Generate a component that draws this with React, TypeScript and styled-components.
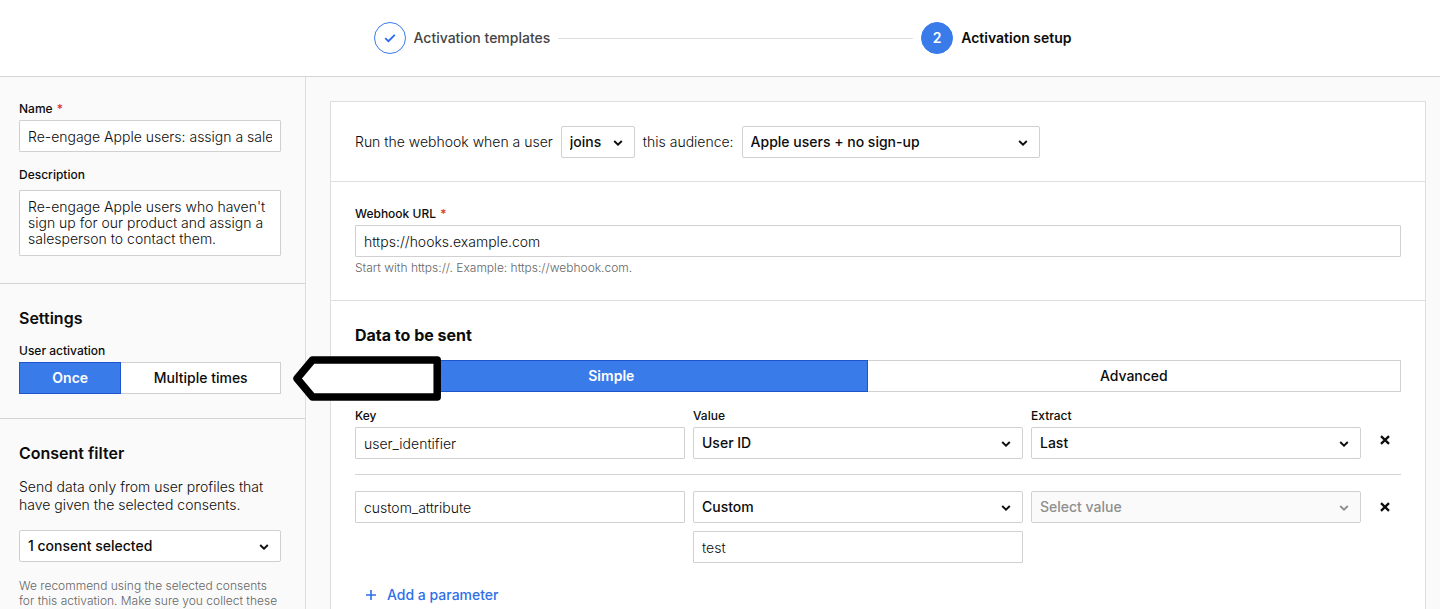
import React from "react";
import styled, { createGlobalStyle } from "styled-components";

const GlobalStyle = createGlobalStyle`
  *, *::before, *::after { box-sizing: border-box; }
  body {
    margin: 0;
    background: #fafafa;
    color: #0c0c0c;
    font-family: Inter, "Liberation Sans", sans-serif;
    font-size: 14px;
    font-weight: 300;
    line-height: 18px;
  }
  button, input, select, textarea { font: inherit; color: inherit; margin: 0; }
  h2, p { margin: 0; }
`;

const Page = styled.div`
  min-height: 100vh;
  display: flex;
  flex-direction: column;
`;

const Header = styled.header`
  height: 77px;
  padding: 0 14px 0 19px;
  display: flex;
  align-items: center;
  justify-content: center;
  background: #fff;
  border-bottom: 1px solid #d4d4d4;
`;

const Stepper = styled.ol`
  flex: 0 1 698px;
  display: flex;
  align-items: center;
  gap: 8px;
  margin: 0;
  padding: 0;
  list-style: none;
`;

const Step = styled.li<{ $active?: boolean }>`
  display: flex;
  align-items: center;
  gap: 8px;
  font-weight: ${(p) => (p.$active ? 600 : 550)};
  color: ${(p) => (p.$active ? "#0c0c0c" : "#444")};
  white-space: nowrap;
`;

const StepMark = styled.span<{ $active?: boolean }>`
  width: 32px;
  height: 32px;
  display: flex;
  align-items: center;
  justify-content: center;
  border: 1px solid #3a7bea;
  border-radius: 50%;
  background: ${(p) => (p.$active ? "#3a7bea" : "#fff")};
  color: ${(p) => (p.$active ? "#fff" : "#2a6af0")};
`;

const StepLine = styled.li`
  flex: 1;
  height: 1px;
  background: #dedede;
`;

const Body = styled.div`
  flex: 1;
  display: flex;
`;

const Sidebar = styled.aside`
  flex: 0 0 306px;
  border-right: 1px solid #dcdcdc;
`;

const SideSection = styled.section`
  padding: 24px 24px 24px 19px;
  display: flex;
  flex-direction: column;
  &:first-child { padding-bottom: 27px; }
  & + & { border-top: 1px solid #d4d4d4; }
`;

const Heading = styled.h2<{ $strong?: boolean }>`
  font-size: 16px;
  line-height: 20px;
  font-weight: ${(p) => (p.$strong ? 650 : 600)};
`;

const Field = styled.div<{ $spaced?: boolean }>`
  min-width: 0;
  display: flex;
  flex-direction: column;
  gap: ${(p) => (p.$spaced ? 7 : 3)}px;
`;

const Label = styled.label`
  font-size: 12px;
  line-height: 16px;
  font-weight: 550;
`;

const Required = styled.span`
  margin-left: 1px;
  color: #e0301e;
`;

const TextInput = styled.input`
  width: 100%;
  height: 32px;
  padding: 0 8px;
  border: 1px solid #d0d0d0;
  border-radius: 1px;
  background: #fff;
`;

const TextArea = styled.textarea`
  display: block;
  width: 100%;
  padding: 8px;
  border: 1px solid #d0d0d0;
  border-radius: 1px;
  background: #fff;
  line-height: 16px;
  resize: none;
  overflow: hidden;
`;

const SelectBox = styled.div<{ $width?: string }>`
  position: relative;
  width: ${(p) => p.$width ?? "100%"};
  svg {
    position: absolute;
    right: 12px;
    top: 14px;
    pointer-events: none;
  }
`;

const NativeSelect = styled.select`
  appearance: none;
  display: block;
  width: 100%;
  height: 32px;
  padding: 0 24px 0 8px;
  border: 1px solid #d0d0d0;
  border-radius: 2px;
  background: #fff;
  font-weight: 550;
  &:disabled { background: #fafafa; color: #8e8e8e; opacity: 1; }
  &:disabled + svg { color: #8e8e8e; }
`;

const Segments = styled.div`
  position: relative;
  display: flex;
`;

const Segment = styled.button<{ $on?: boolean }>`
  flex: 1 1 auto;
  height: 32px;
  padding: 0 8px;
  border: 1px solid ${(p) => (p.$on ? "#1f55cc" : "#d0d0d0")};
  border-left-width: ${(p) => (p.$on ? 1 : 0)}px;
  background: ${(p) => (p.$on ? "#3a7bea" : "#fff")};
  color: ${(p) => (p.$on ? "#fff" : "#0c0c0c")};
  font-weight: ${(p) => (p.$on ? 600 : 550)};
`;

const Callout = styled.svg`
  position: absolute;
  z-index: 2;
  left: calc(100% + 12px);
  top: 50%;
  transform: translateY(-50%);
`;

const Help = styled.p`
  font-size: 12px;
  line-height: 15px;
  color: #666;
`;

const Stack = styled.div<{ $gap: number }>`
  display: flex;
  flex-direction: column;
  gap: ${(p) => p.$gap}px;
`;

const Main = styled.main`
  flex: 1;
  min-width: 0;
  padding: 24px 14px 0 24px;
  display: flex;
`;

const Card = styled.div`
  flex: 1;
  min-width: 0;
  background: #fff;
  border: 1px solid #dedede;
  border-bottom: 0;
`;

const CardSection = styled.section`
  padding: 24px 24px 25px;
  &:first-child { padding-bottom: 23px; }
  & + & { border-top: 1px solid #dedede; }
`;

const Sentence = styled.div`
  display: flex;
  align-items: center;
  gap: 8px;
  white-space: nowrap;
`;

const ParamRow = styled.div`
  display: grid;
  grid-template-columns: repeat(3, minmax(0, 1fr)) 32px;
  gap: 8px;
  align-items: end;
`;

const Divider = styled.hr`
  width: 100%;
  height: 1px;
  margin: 15px 0 16px;
  border: 0;
  background: #d4d4d4;
`;

const IconButton = styled.button<{ $tall?: boolean }>`
  height: ${(p) => (p.$tall ? 38 : 32)}px;
  padding: 0;
  display: flex;
  align-items: center;
  justify-content: center;
  border: 0;
  background: none;
`;

const AddButton = styled.button`
  margin-top: 20px;
  padding: 0 10px;
  display: flex;
  align-items: center;
  gap: 10px;
  border: 0;
  background: none;
  color: #2f6fe8;
  font-weight: 550;
  line-height: 24px;
`;

const Chevron = () => (
  <svg width="10" height="6" viewBox="0 0 10 6" fill="none" stroke="currentColor" strokeWidth="1.9" aria-hidden="true">
    <path d="M1.2 1l3.8 3.6L8.8 1" />
  </svg>
);

const Cross = () => (
  <svg width="10" height="10" viewBox="0 0 10 10" fill="none" stroke="currentColor" strokeWidth="2.3" aria-hidden="true">
    <path d="M1 1.2l8 7.6M9 1.2l-8 7.6" />
  </svg>
);

type PickProps = { id?: string; label?: string; value: string; width?: string; disabled?: boolean };

const Pick = ({ id, label, value, width, disabled }: PickProps) => (
  <SelectBox $width={width}>
    <NativeSelect id={id} aria-label={label} disabled={disabled} defaultValue={value}>
      <option>{value}</option>
    </NativeSelect>
    <Chevron />
  </SelectBox>
);

export default function App() {
  return (
    <Page>
      <GlobalStyle />
      <Header>
        <Stepper>
          <Step>
            <StepMark>
              <svg width="12" height="10" viewBox="0 0 12 10" fill="none" stroke="currentColor" strokeWidth="1.8" aria-hidden="true">
                <path d="M1.2 5.2l3.2 3L10.8 1.8" />
              </svg>
            </StepMark>
            Activation templates
          </Step>
          <StepLine aria-hidden="true" />
          <Step $active aria-current="step">
            <StepMark $active>2</StepMark>
            Activation setup
          </Step>
        </Stepper>
      </Header>
      <Body>
        <Sidebar>
          <SideSection>
            <Stack $gap={15}>
              <Field>
                <Label htmlFor="name">
                  Name <Required>*</Required>
                </Label>
                <TextInput id="name" defaultValue="Re-engage Apple users: assign a sale" />
              </Field>
              <Field $spaced>
                <Label htmlFor="description">Description</Label>
                <TextArea
                  id="description"
                  rows={3}
                  defaultValue="Re-engage Apple users who haven't sign up for our product and assign a salesperson to contact them."
                />
              </Field>
            </Stack>
          </SideSection>
          <SideSection>
            <Stack $gap={15}>
              <Heading>Settings</Heading>
              <Field>
                <Label as="span" id="activation-label">User activation</Label>
                <Segments role="group" aria-labelledby="activation-label">
                  <Segment type="button" $on aria-pressed="true">Once</Segment>
                  <Segment type="button" aria-pressed="false">Multiple times</Segment>
                  <Callout width="148" height="46" viewBox="0 0 148 46" aria-hidden="true">
                    <path
                      d="M4 23.5L19.5 5H144.2V42H19.5Z"
                      fill="#fff"
                      stroke="#000"
                      strokeWidth="7.5"
                      strokeLinejoin="round"
                    />
                  </Callout>
                </Segments>
              </Field>
            </Stack>
          </SideSection>
          <SideSection>
            <Stack $gap={15}>
              <Heading>Consent filter</Heading>
              <Stack $gap={16}>
                <p>Send data only from user profiles that have given the selected consents.</p>
                <Pick label="Consents" value="1 consent selected" />
                <Help>We recommend using the selected consents for this activation. Make sure you collect these</Help>
              </Stack>
            </Stack>
          </SideSection>
        </Sidebar>
        <Main>
          <Card>
            <CardSection>
              <Sentence>
                <span>Run the webhook when a user</span>
                <Pick label="Trigger" value="joins" width="74px" />
                <span>this audience:</span>
                <Pick label="Audience" value="Apple users + no sign-up" width="298px" />
              </Sentence>
            </CardSection>
            <CardSection>
              <Field>
                <Label htmlFor="url">
                  Webhook URL <Required>*</Required>
                </Label>
                <TextInput id="url" type="url" defaultValue="https://hooks.example.com" />
                <Help>Start with https://. Example: https://webhook.com.</Help>
              </Field>
            </CardSection>
            <CardSection>
              <Stack $gap={15}>
                <Heading $strong>Data to be sent</Heading>
                <Stack $gap={16}>
                  <Segments role="group" aria-label="Mode">
                    <Segment type="button" $on aria-pressed="true">Simple</Segment>
                    <Segment type="button" aria-pressed="false">Advanced</Segment>
                  </Segments>
                  <div>
                    <ParamRow>
                      <Field>
                        <Label htmlFor="key-1">Key</Label>
                        <TextInput id="key-1" defaultValue="user_identifier" />
                      </Field>
                      <Field>
                        <Label htmlFor="value-1">Value</Label>
                        <Pick id="value-1" value="User ID" />
                      </Field>
                      <Field>
                        <Label htmlFor="extract-1">Extract</Label>
                        <Pick id="extract-1" value="Last" />
                      </Field>
                      <IconButton type="button" $tall aria-label="Remove user_identifier"><Cross /></IconButton>
                    </ParamRow>
                    <Divider />
                    <ParamRow>
                      <TextInput aria-label="Key" defaultValue="custom_attribute" />
                      <Pick label="Value" value="Custom" />
                      <Pick label="Extract" value="Select value" disabled />
                      <IconButton type="button" aria-label="Remove custom_attribute"><Cross /></IconButton>
                      <span />
                      <TextInput aria-label="Custom value" defaultValue="test" />
                    </ParamRow>
                    <AddButton type="button">
                      <svg width="12" height="12" viewBox="0 0 12 12" fill="none" stroke="currentColor" strokeWidth="1.6" aria-hidden="true">
                        <path d="M6 1v10M1 6h10" />
                      </svg>
                      Add a parameter
                    </AddButton>
                  </div>
                </Stack>
              </Stack>
            </CardSection>
          </Card>
        </Main>
      </Body>
    </Page>
  );
}
